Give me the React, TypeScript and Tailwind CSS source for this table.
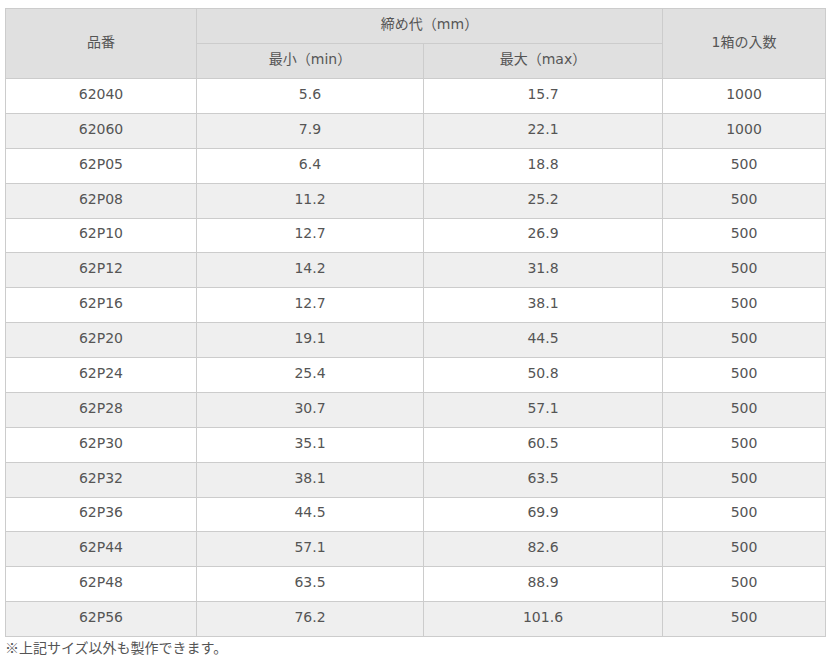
const rows: [string, string, string, string][] = [
  ["62040", "5.6", "15.7", "1000"],
  ["62060", "7.9", "22.1", "1000"],
  ["62P05", "6.4", "18.8", "500"],
  ["62P08", "11.2", "25.2", "500"],
  ["62P10", "12.7", "26.9", "500"],
  ["62P12", "14.2", "31.8", "500"],
  ["62P16", "12.7", "38.1", "500"],
  ["62P20", "19.1", "44.5", "500"],
  ["62P24", "25.4", "50.8", "500"],
  ["62P28", "30.7", "57.1", "500"],
  ["62P30", "35.1", "60.5", "500"],
  ["62P32", "38.1", "63.5", "500"],
  ["62P36", "44.5", "69.9", "500"],
  ["62P44", "57.1", "82.6", "500"],
  ["62P48", "63.5", "88.9", "500"],
  ["62P56", "76.2", "101.6", "500"],
];

const head = "border border-[#cccccc] text-center align-middle h-[35px] pt-0 pb-[4px] px-0 font-normal";
const cell = "border border-[#cccccc] text-center align-middle h-[34.875px] pt-0 pb-[4px] px-0";

export default function App() {
  return (
    <div
      className="bg-white w-[831px] h-[661px] pl-[5px] pt-[8px] text-[14px] leading-[20px] text-[#555555]"
      style={{ fontFamily: '"DejaVu Sans", "Noto Sans CJK JP", sans-serif' }}
    >
      <table className="border-collapse table-fixed w-[820px]">
        <colgroup>
          <col className="w-[191px]" />
          <col className="w-[227px]" />
          <col className="w-[239px]" />
          <col className="w-[163px]" />
        </colgroup>
        <thead>
          <tr className="bg-[#e0e0e0]">
            <th rowSpan={2} className={head}>品番</th>
            <th colSpan={2} className={head}>締め代（mm）</th>
            <th rowSpan={2} className={head}>1箱の入数</th>
          </tr>
          <tr className="bg-[#e0e0e0]">
            <th className={head}>最小（min）</th>
            <th className={head}>最大（max）</th>
          </tr>
        </thead>
        <tbody>
          {rows.map((r, i) => (
            <tr key={r[0]} className={i % 2 === 1 ? "bg-[#efefef]" : "bg-white"}>
              {r.map((v, j) => (
                <td key={j} className={cell}>{v}</td>
              ))}
            </tr>
          ))}
        </tbody>
      </table>
      <p style={{ fontFamily: '"Noto Sans CJK JP", sans-serif' }}>※上記サイズ以外も製作できます。</p>
    </div>
  );
}
